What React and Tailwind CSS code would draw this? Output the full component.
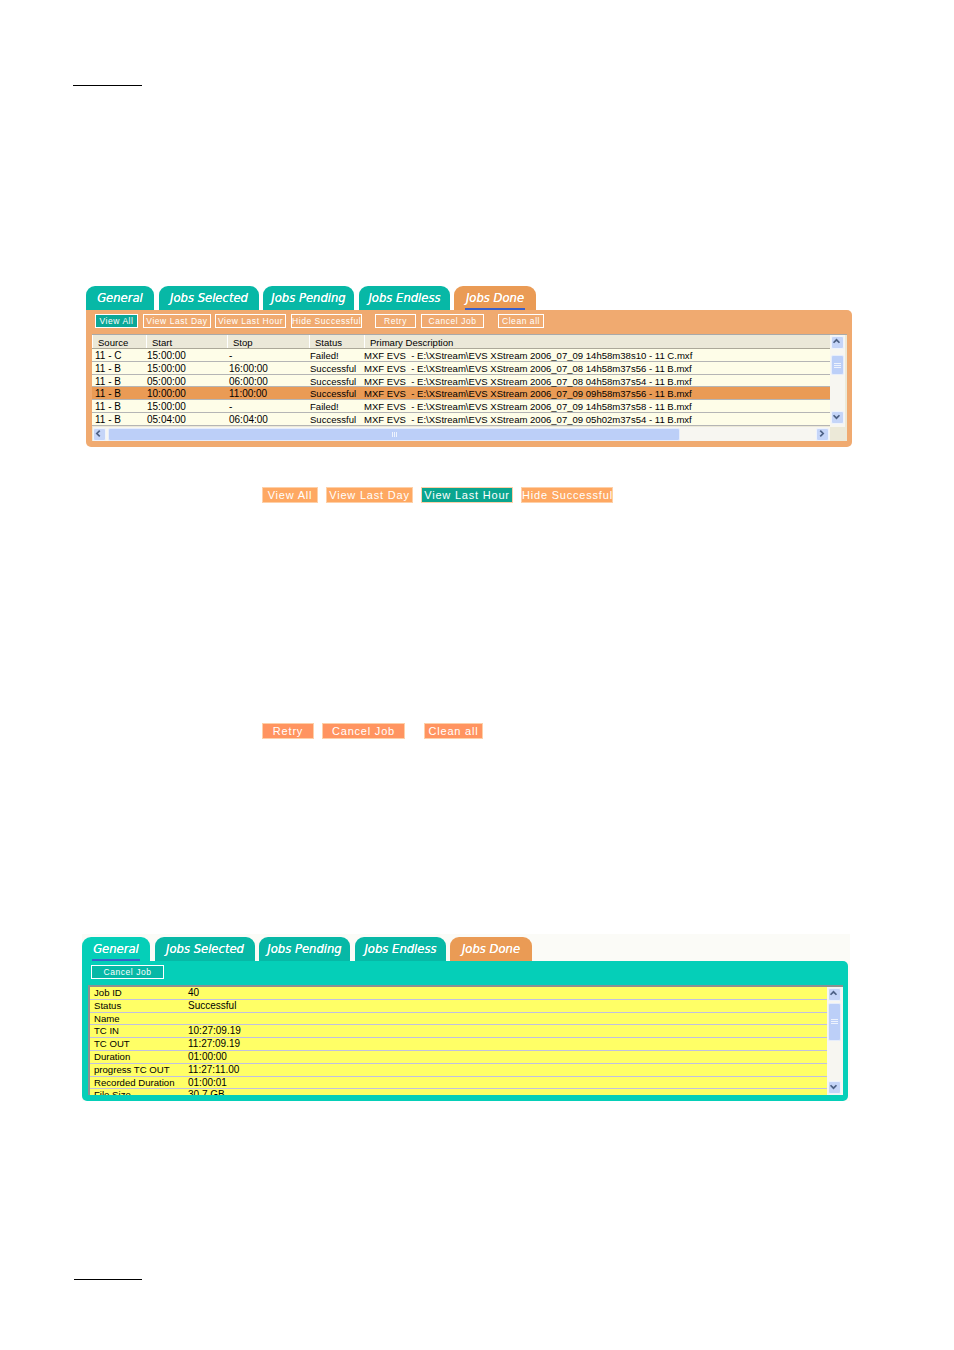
import React from 'react';

const uiFont = "font-['Liberation_Sans',_'Noto_Sans',_sans-serif]";
const tabFont = "font-['DejaVu_Sans',_'Liberation_Sans',_sans-serif]";

const TAB_LABELS = [
  { label: 'General', width: 'w-[68px]', gap: 'mr-[5px]' },
  { label: 'Jobs Selected', width: 'w-[100px]', gap: 'mr-[4px]' },
  { label: 'Jobs Pending', width: 'w-[91px]', gap: 'mr-[5px]' },
  { label: 'Jobs Endless', width: 'w-[91px]', gap: 'mr-[4px]' },
  { label: 'Jobs Done', width: 'w-[82px]', gap: '' },
];

const JOBS = [
  ['11 - C', '15:00:00', '-', 'Failed!', 'MXF EVS  - E:\\XStream\\EVS XStream 2006_07_09 14h58m38s10 - 11 C.mxf'],
  ['11 - B', '15:00:00', '16:00:00', 'Successful', 'MXF EVS  - E:\\XStream\\EVS XStream 2006_07_08 14h58m37s56 - 11 B.mxf'],
  ['11 - B', '05:00:00', '06:00:00', 'Successful', 'MXF EVS  - E:\\XStream\\EVS XStream 2006_07_08 04h58m37s54 - 11 B.mxf'],
  ['11 - B', '10:00:00', '11:00:00', 'Successful', 'MXF EVS  - E:\\XStream\\EVS XStream 2006_07_09 09h58m37s56 - 11 B.mxf'],
  ['11 - B', '15:00:00', '-', 'Failed!', 'MXF EVS  - E:\\XStream\\EVS XStream 2006_07_09 14h58m37s58 - 11 B.mxf'],
  ['11 - B', '05:04:00', '06:04:00', 'Successful', 'MXF EVS  - E:\\XStream\\EVS XStream 2006_07_09 05h02m37s54 - 11 B.mxf'],
];

// source and time columns run a little wider than status and description
const CELL_STYLE = [
  'pl-[3px] text-[10px]',
  'pl-[1px] text-[10px]',
  'pl-[2px] text-[10px]',
  'pl-[1px] text-[9.55px]',
  'text-[9.55px]',
];

const DETAILS = [
  ['Job ID', '40'],
  ['Status', 'Successful'],
  ['Name', ''],
  ['TC IN', '10:27:09.19'],
  ['TC OUT', '11:27:09.19'],
  ['Duration', '01:00:00'],
  ['progress TC OUT', '11:27:11.00'],
  ['Recorded Duration', '01:00:01'],
  ['File Size', '30.7 GB'],
];

const TOOLBAR = [
  { label: 'View All', cls: 'w-[43px] mr-[5px] bg-[#0aa898]' },
  { label: 'View Last Day', cls: 'w-[68px] mr-[4px]' },
  { label: 'View Last Hour', cls: 'w-[71px] mr-[5px]' },
  { label: 'Hide Successful', cls: 'w-[71px] mr-[13px]' },
  { label: 'Retry', cls: 'w-[41px] mr-[5px]' },
  { label: 'Cancel Job', cls: 'w-[63px] mr-[14px]' },
  { label: 'Clean all', cls: 'w-[46px]' },
];

const Tabs = ({ active, selected }) => (
  <div className="flex h-[24px] items-stretch">
    {TAB_LABELS.map(({ label, width, gap }) => {
      const isDone = label === 'Jobs Done';
      const color = isDone
        ? 'bg-[#ea9b55]'
        : active === 'teal' && label === 'General'
          ? 'bg-[#05cfb8]'
          : 'bg-[#07b8a6]';
      return (
        <div key={label} className={`${width} ${gap} ${color} rounded-t-[9px] flex justify-center pt-[4px]`}>
          <span
            className={`h-[20px] px-[1px] text-[11.6px] leading-[16px] italic text-white whitespace-nowrap [text-shadow:0_0_0.6px_white] ${tabFont} ${
              selected === label ? 'border-b-2 border-[#3a5fc8]' : ''
            }`}
          >
            {label}
          </span>
        </div>
      );
    })}
  </div>
);

const ScrollButton = ({ direction }) => {
  const points = {
    up: '3,8 6.5,4.5 10,8',
    down: '3,5 6.5,8.5 10,5',
    left: '8,3 4.5,6.5 8,10',
    right: '5,3 8.5,6.5 5,10',
  }[direction];
  return (
    <div className="w-[13px] h-[13px] shrink-0 rounded-[2px] bg-[#c5d5f8] border border-[#eef3fd]">
      <svg viewBox="0 0 13 13" className="w-full h-full -m-px" width="13" height="13">
        <polyline points={points} fill="none" stroke="#4d6185" strokeWidth="2" />
      </svg>
    </div>
  );
};

const VerticalScroll = ({ thumb, spacer }) => (
  <div className="w-[15px] shrink-0 bg-[#f7f6f1] flex flex-col items-center pt-px pb-px self-stretch">
    <ScrollButton direction="up" />
    <div className={`${thumb} w-[13px] rounded-[2px] bg-[#bccff8] border border-[#e6edfc] flex flex-col items-center justify-center gap-px`}>
      <div className="w-[7px] h-px bg-[#eef3fd]" />
      <div className="w-[7px] h-px bg-[#eef3fd]" />
      <div className="w-[7px] h-px bg-[#eef3fd]" />
    </div>
    <div className={spacer} />
    <ScrollButton direction="down" />
  </div>
);

const JobsTable = () => {
  const columns = 'grid grid-cols-[54px_81px_82px_55px_467px]';
  return (
    <div className={`mx-[6px] mt-[6px] h-[107px] w-[755px] bg-[#ece9d8] border-t border-[#a9a9a9] flex flex-col overflow-hidden text-[9.55px] text-black ${uiFont}`}>
      <div className="flex h-[92px]">
        <div className="w-[738px] overflow-hidden">
          <div className={`${columns} h-[14px] bg-[#ebe8d8] border-b border-[#aca899] leading-[15px]`}>
            {['Source', 'Start', 'Stop', 'Status', 'Primary Description'].map((title) => (
              <div key={title} className="pl-[5px] border-l border-white whitespace-nowrap overflow-hidden">
                {title}
              </div>
            ))}
          </div>
          {JOBS.map((row, i) => (
            <div
              key={i}
              className={`${columns} h-[12.8px] leading-[13px] border-b border-[#b5b5b5] ${
                i === 3 ? 'bg-[#ea9b55]' : 'bg-[#fefde8]'
              }`}
            >
              {row.map((cell, j) => (
                <div key={j} className={`${CELL_STYLE[j]} whitespace-pre`}>
                  {cell}
                </div>
              ))}
            </div>
          ))}
        </div>
        <VerticalScroll thumb="mt-[6px] h-[20px]" spacer="h-[36px] w-full" />
      </div>
      <div className="h-[14px] ml-px w-[737px] bg-[#f7f6f1] flex items-center pr-px">
        <ScrollButton direction="left" />
        <div className="ml-[2px] h-[13px] w-[572px] rounded-[2px] bg-[#bccff8] border border-[#e6edfc] flex items-center justify-center gap-px">
          <div className="h-[5px] w-px bg-[#eef3fd]" />
          <div className="h-[5px] w-px bg-[#eef3fd]" />
          <div className="h-[5px] w-px bg-[#eef3fd]" />
        </div>
        <div className="grow" />
        <ScrollButton direction="right" />
      </div>
    </div>
  );
};

const DetailsTable = () => (
  <div className={`mx-[6px] mt-[6px] h-[110px] w-[755px] bg-[#f7f6f1] border-t-2 border-l-2 border-[#8f8f8f] flex overflow-hidden text-[9.6px] text-black ${uiFont}`}>
    <div className="w-[737px] h-[110px] bg-[#ffff66]">
      {DETAILS.map(([name, value]) => (
        <div key={name} className="flex h-[12.8px] leading-[11px] border-b border-[#c0c0e0] bg-[#ffff66]">
          <div className="w-[98px] shrink-0 pl-[4px] whitespace-nowrap">{name}</div>
          <div className="text-[10px]">{value}</div>
        </div>
      ))}
    </div>
    <VerticalScroll thumb="mt-[2px] h-[38px]" spacer="h-[41px] w-full" />
  </div>
);

const LargeButton = ({ children, cls }) => (
  <div className={`${cls} h-[16px] bg-[#fea862] border border-[#fed0a8] text-center text-[11px] leading-[14px] tracking-[0.8px] text-white whitespace-nowrap ${uiFont}`}>
    {children}
  </div>
);

export default function App() {
  return (
    <div className="relative w-[954px] h-[1350px] bg-white overflow-hidden">
      <div className="ml-[73px] mt-[85px] w-[69px] h-px bg-black" />

      {/* Jobs Done panel */}
      <div className="ml-[86px] mt-[200px] w-[766px]">
        <Tabs active="orange" selected="Jobs Done" />
        <div className="h-[137px] bg-[#f0aa70] rounded-b-[5px] rounded-tr-[5px] pt-[4px]">
          <div className="flex ml-[9px] h-[14px]">
            {TOOLBAR.map(({ label, cls }) => (
              <div
                key={label}
                className={`${cls} h-[14px] border border-white text-center text-[8.5px] leading-[13px] tracking-[0.55px] text-white whitespace-nowrap ${uiFont}`}
              >
                {label}
              </div>
            ))}
          </div>
          <JobsTable />
        </div>
      </div>

      {/* View filter buttons */}
      <div className="ml-[262px] mt-[40px] flex">
        <LargeButton cls="w-[56px] mr-[8px]">View All</LargeButton>
        <LargeButton cls="w-[87px] mr-[8px]">View Last Day</LargeButton>
        <LargeButton cls="w-[92px] mr-[8px] !bg-[#0aa58f]">View Last Hour</LargeButton>
        <LargeButton cls="w-[92px]">Hide Successful</LargeButton>
      </div>

      {/* Action buttons */}
      <div className="ml-[262px] mt-[220px] flex">
        <LargeButton cls="w-[52px] mr-[8px] !bg-[#ff9460]">Retry</LargeButton>
        <LargeButton cls="w-[83px] mr-[19px] !bg-[#ff9460]">Cancel Job</LargeButton>
        <LargeButton cls="w-[59px] !bg-[#ff9460]">Clean all</LargeButton>
      </div>

      {/* General panel */}
      <div className="ml-[82px] mt-[195px] w-[768px] bg-[#fbfbf7] pt-[3px]">
        <Tabs active="teal" selected="General" />
        <div className="w-[766px] h-[140px] bg-[#05cfb8] rounded-b-[5px] rounded-tr-[5px] pt-[4px]">
          <div className={`ml-[9px] w-[73px] h-[14px] bg-[#07b8a6] border border-white text-center text-[8.5px] leading-[13px] tracking-[0.55px] text-white ${uiFont}`}>
            Cancel Job
          </div>
          <DetailsTable />
        </div>
      </div>

      <div className="ml-[74px] mt-[178px] w-[68px] h-px bg-black" />
    </div>
  );
}
